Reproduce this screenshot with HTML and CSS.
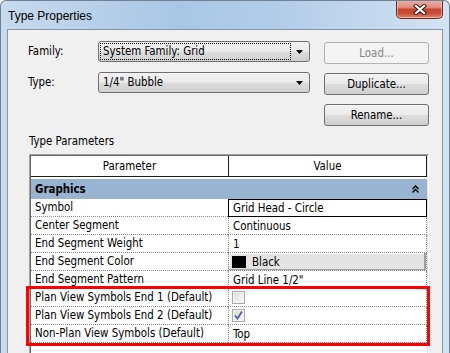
FILE: index.html
```html
<!DOCTYPE html>
<html>
<head>
<meta charset="utf-8">
<link rel="stylesheet" href="styles.css">
</head>
<body>
<div class="window">
  <div class="titlebar">
    <span class="title">Type Properties</span>
    <div class="close-btn">
      <svg width="14" height="11" viewBox="0 0 14 11">
        <path d="M3 2 L11 9 M11 2 L3 9" stroke="#3b1a16" stroke-width="4.2" stroke-linecap="square"/>
        <path d="M3 2 L11 9 M11 2 L3 9" stroke="#ffffff" stroke-width="2.2" stroke-linecap="square"/>
      </svg>
    </div>
  </div>
  <div class="client">
    <div class="form">
      <span class="lbl">Family:</span>
      <div class="combo"><span class="combo-text focus">System Family: Grid</span><span class="arrow"><svg width="7" height="4" viewBox="0 0 7 4"><polygon points="0,0 7,0 3.5,4" fill="#000"/></svg></span></div>
      <button class="btn disabled">Load...</button>
      <span class="lbl">Type:</span>
      <div class="combo"><span class="combo-text">1/4" Bubble</span><span class="arrow"><svg width="7" height="4" viewBox="0 0 7 4"><polygon points="0,0 7,0 3.5,4" fill="#000"/></svg></span></div>
      <button class="btn">Duplicate...</button>
      <button class="btn col3">Rename...</button>
    </div>
    <div class="section-label">Type Parameters</div>
    <div class="grid-outer">
      <div class="grid-inner">
        <div class="ghead">
          <div class="hcell">Parameter</div>
          <div class="hcell">Value</div>
        </div>
        <div class="group">
          <span>Graphics</span>
          <svg class="collapse" width="7" height="8" viewBox="0 0 7 8">
            <path d="M0.5 4 L3.5 1 L6.5 4 M0.5 7.5 L3.5 4.5 L6.5 7.5" stroke="#000" stroke-width="1.4" fill="none"/>
          </svg>
        </div>
        <div class="row"><div class="pcell">Symbol</div><div class="vcell edit">Grid Head - Circle</div></div>
        <div class="row"><div class="pcell">Center Segment</div><div class="vcell">Continuous</div></div>
        <div class="row"><div class="pcell">End Segment Weight</div><div class="vcell">1</div></div>
        <div class="row"><div class="pcell">End Segment Color</div><div class="vcell colorbtn"><span class="swatch"></span>Black</div></div>
        <div class="row"><div class="pcell">End Segment Pattern</div><div class="vcell">Grid Line 1/2"</div></div>
        <div class="hl">
          <div class="row"><div class="pcell">Plan View Symbols End 1 (Default)</div><div class="vcell"><span class="chk"></span></div></div>
          <div class="row"><div class="pcell">Plan View Symbols End 2 (Default)</div><div class="vcell"><span class="chk"><svg width="11" height="11" viewBox="0 0 11 11"><path d="M2 5.5 L4.5 8.5 L9 1.5" stroke="#4e6390" stroke-width="1.8" fill="none"/></svg></span></div></div>
          <div class="row"><div class="pcell">Non-Plan View Symbols (Default)</div><div class="vcell">Top</div></div>
        </div>
      </div>
    </div>
  </div>
</div>
</body>
</html>
```

FILE: styles.css
```css
html, body {
  margin: 0;
  padding: 0;
}
body {
  width: 450px;
  height: 353px;
  overflow: hidden;
  background: #ffffff;
  font-family: "DejaVu Sans Condensed", "DejaVu Sans", sans-serif;
  font-size: 11.4px;
  color: #000;
}
.window {
  width: 450px;
  height: 353px;
  box-sizing: border-box;
  border: 1px solid #6f8196;
  border-bottom: none;
  border-radius: 6px 6px 0 0;
  padding: 0 6px;
  background: linear-gradient(to right, #c7daee 0%, #a9c7e5 40%, #b4cee9 65%, #d3e3f3 100%);
  display: flex;
  flex-direction: column;
  overflow: hidden;
}
.titlebar {
  height: 28px;
  flex: none;
  display: flex;
  justify-content: space-between;
  align-items: flex-start;
}
.title {
  font-family: "Liberation Sans", Arial, sans-serif;
  font-size: 12px;
  padding: 8px 0 0 1px;
  line-height: 14px;
}
.close-btn {
  width: 47px;
  height: 19px;
  margin-top: -1px;
  box-sizing: border-box;
  border: 1px solid #6a2a22;
  border-top: none;
  border-radius: 0 0 5px 5px;
  background: linear-gradient(#eab0a6 0%, #de8f82 40%, #c6472f 52%, #c84d36 75%, #e08a6c 100%);
  box-shadow: inset 0 0 0 1px rgba(255, 220, 210, 0.55);
  display: flex;
  align-items: center;
  justify-content: center;
}
.client {
  flex: 1;
  background: #f0f0f0;
  border: 1px solid #8596aa;
  border-bottom: none;
  padding: 11px 0 0 20px;
}
.form {
  display: grid;
  grid-template-columns: 56px 212px 105px;
  grid-auto-rows: 23px;
  column-gap: 14px;
  row-gap: 8px;
}
.lbl {
  line-height: 21px;
}
.combo {
  height: 21px;
  box-sizing: border-box;
  border: 1px solid #707070;
  border-radius: 3px;
  background: linear-gradient(#f2f2f2 0%, #ebebeb 48%, #dddddd 52%, #d0d0d0 100%);
  display: flex;
  align-items: stretch;
  padding: 1px;
}
.combo-text {
  flex: 1;
  border: 1px dotted transparent;
  padding-left: 2px;
  line-height: 15px;
}
.combo-text.focus {
  border-color: #000;
}
.arrow {
  width: 17px;
  display: flex;
  align-items: center;
  justify-content: center;
}
.btn {
  margin: 1px 0 0 0;
  height: 22px;
  box-sizing: border-box;
  border: 1px solid #707070;
  border-radius: 3px;
  background: linear-gradient(#f2f2f2 0%, #ebebeb 48%, #dddddd 52%, #cfcfcf 100%);
  font-family: inherit;
  font-size: 11.4px;
  color: #000;
  padding: 0;
}
.btn.disabled {
  border-color: #adb2b5;
  background: #f4f4f4;
  color: #838383;
}
.col3 {
  grid-column: 3;
}
.section-label {
  margin-top: 9px;
  line-height: 13px;
  padding-left: 1px;
}
.grid-outer {
  margin: 6px 0 0 1px;
  width: 400px;
  box-sizing: border-box;
  border: 1px solid;
  border-color: #a0a0a0 #ffffff #ffffff #a0a0a0;
  border-bottom: none;
  height: 200px;
}
.grid-inner {
  border: 1px solid;
  border-color: #696969 #e3e3e3 #e3e3e3 #696969;
  border-bottom: none;
  background: #ffffff;
  height: 100%;
}
.ghead {
  display: grid;
  grid-template-columns: 198px 198px;
  height: 21px;
}
.hcell {
  border-right: 1px solid #1e1e1e;
  border-bottom: 1px solid #1e1e1e;
  text-align: center;
  line-height: 20px;
}
.group {
  margin-top: 2px;
  height: 20px;
  background: #99b4d1;
  display: flex;
  align-items: center;
  justify-content: space-between;
  padding: 0 8px 0 4px;
  font-weight: bold;
}
.collapse {
  display: block;
}
.row {
  display: grid;
  grid-template-columns: 197px 199px;
  height: 18px;
}
.pcell {
  border-bottom: 1px dotted #8a8a8a;
  padding-left: 4px;
  line-height: 16px;
  white-space: nowrap;
}
.vcell {
  border-bottom: 1px dotted #8a8a8a;
  border-left: 1px dotted #8a8a8a;
  border-right: 1px dotted #8a8a8a;
  padding-left: 4px;
  line-height: 16px;
  display: flex;
  align-items: center;
  white-space: nowrap;
}
.vcell.edit {
  border: 1px solid #000;
  line-height: 15px;
}
.vcell.colorbtn {
  background: #e4e4e4;
  box-shadow: inset -2px -1px 0 #a0a0a0, inset 1px 1px 0 #ffffff;
  padding-left: 3px;
}
.swatch {
  width: 14px;
  height: 12px;
  background: #000;
  margin-right: 6px;
}
.chk {
  width: 13px;
  height: 13px;
  box-sizing: border-box;
  border: 1px solid #a9a9a9;
  background: linear-gradient(135deg, #d8d8d8 0%, #eeeeee 60%, #f8f8f8 100%);
  box-shadow: inset 0 0 0 1px #f4f4f4;
  display: flex;
  align-items: center;
  justify-content: center;
  margin-left: -1px;
}
.chk svg {
  display: block;
}
.hl {
  position: relative;
}
.hl::after {
  content: "";
  position: absolute;
  left: -5px;
  right: -3px;
  top: -3px;
  bottom: -3px;
  border: 3px solid #ff0000;
  pointer-events: none;
}
```
